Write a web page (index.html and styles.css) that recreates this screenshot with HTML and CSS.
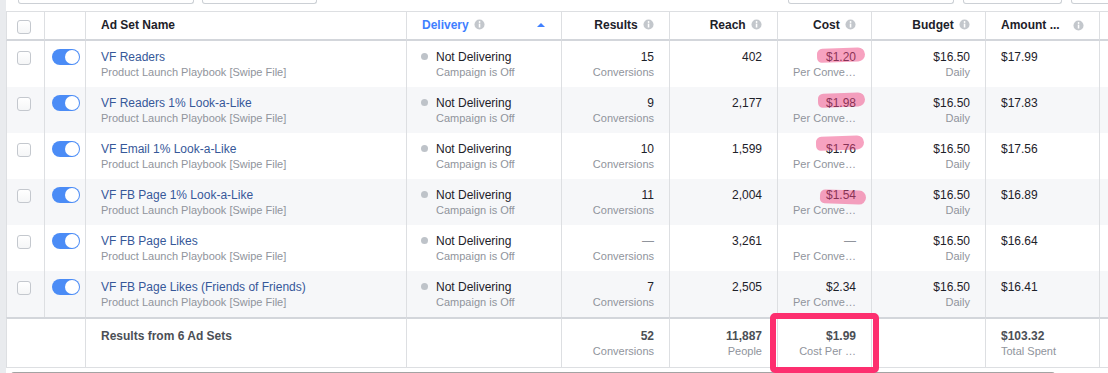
FILE: index.html
```html
<!DOCTYPE html>
<html lang="en">
<head>
<meta charset="utf-8">
<title>Ad Sets</title>
<link rel="stylesheet" href="styles.css">
</head>
<body>
<div class="page">
  <div class="toolbar">
    <span class="tbtn w1"></span>
    <span class="tbtn w2"></span>
    <span class="tbtn w3"></span>
    <span class="tbtn w4"></span>
    <span class="tbtn w5"></span>
  </div>
  <table class="grid">
    <thead>
      <tr>
        <th class="c1"><span class="cb"></span></th>
        <th class="c2"></th>
        <th class="c3 left">Ad Set Name</th>
        <th class="c4 left">
          <div class="hsplit">
            <span class="sorted">Delivery <svg class="info" viewBox="0 0 12 12"><circle cx="6" cy="6" r="5.5" fill="#c3c7cc"/><rect x="5.2" y="5" width="1.7" height="4.3" fill="#fff"/><circle cx="6.1" cy="3.3" r="1" fill="#fff"/></svg></span>
            <span class="caret"></span>
          </div>
        </th>
        <th class="c5 num">Results <svg class="info" viewBox="0 0 12 12"><circle cx="6" cy="6" r="5.5" fill="#c3c7cc"/><rect x="5.2" y="5" width="1.7" height="4.3" fill="#fff"/><circle cx="6.1" cy="3.3" r="1" fill="#fff"/></svg></th>
        <th class="c6 num">Reach <svg class="info" viewBox="0 0 12 12"><circle cx="6" cy="6" r="5.5" fill="#c3c7cc"/><rect x="5.2" y="5" width="1.7" height="4.3" fill="#fff"/><circle cx="6.1" cy="3.3" r="1" fill="#fff"/></svg></th>
        <th class="c7 num">Cost <svg class="info" viewBox="0 0 12 12"><circle cx="6" cy="6" r="5.5" fill="#c3c7cc"/><rect x="5.2" y="5" width="1.7" height="4.3" fill="#fff"/><circle cx="6.1" cy="3.3" r="1" fill="#fff"/></svg></th>
        <th class="c8 num">Budget <svg class="info" viewBox="0 0 12 12"><circle cx="6" cy="6" r="5.5" fill="#c3c7cc"/><rect x="5.2" y="5" width="1.7" height="4.3" fill="#fff"/><circle cx="6.1" cy="3.3" r="1" fill="#fff"/></svg></th>
        <th class="c9 left">
          <div class="hsplit">
            <span>Amount ...</span>
            <svg class="info" viewBox="0 0 12 12"><circle cx="6" cy="6" r="5.5" fill="#c3c7cc"/><rect x="5.2" y="5" width="1.7" height="4.3" fill="#fff"/><circle cx="6.1" cy="3.3" r="1" fill="#fff"/></svg>
          </div>
        </th>
        <th class="c10"></th>
      </tr>
    </thead>
    <tbody>
      <tr>
        <td class="c1"><span class="cb"></span></td>
        <td class="c2"><span class="toggle"></span></td>
        <td><div class="main name">VF Readers</div><div class="sub">Product Launch Playbook [Swipe File]</div></td>
        <td class="deliv"><div class="main"><span class="dot"></span>Not Delivering</div><div class="sub ind">Campaign is Off</div></td>
        <td class="num"><div class="main">15</div><div class="sub">Conversions</div></td>
        <td class="num"><div class="main">402</div></td>
        <td class="num"><div class="main"><span class="hl hl-a">$1.20</span></div><div class="sub">Per Conve…</div></td>
        <td class="num"><div class="main">$16.50</div><div class="sub">Daily</div></td>
        <td><div class="main">$17.99</div></td>
        <td></td>
      </tr>
      <tr>
        <td class="c1"><span class="cb"></span></td>
        <td class="c2"><span class="toggle"></span></td>
        <td><div class="main name">VF Readers 1% Look-a-Like</div><div class="sub">Product Launch Playbook [Swipe File]</div></td>
        <td class="deliv"><div class="main"><span class="dot"></span>Not Delivering</div><div class="sub ind">Campaign is Off</div></td>
        <td class="num"><div class="main">9</div><div class="sub">Conversions</div></td>
        <td class="num"><div class="main">2,177</div></td>
        <td class="num"><div class="main"><span class="hl hl-b">$1.98</span></div><div class="sub">Per Conve…</div></td>
        <td class="num"><div class="main">$16.50</div><div class="sub">Daily</div></td>
        <td><div class="main">$17.83</div></td>
        <td></td>
      </tr>
      <tr>
        <td class="c1"><span class="cb"></span></td>
        <td class="c2"><span class="toggle"></span></td>
        <td><div class="main name">VF Email 1% Look-a-Like</div><div class="sub">Product Launch Playbook [Swipe File]</div></td>
        <td class="deliv"><div class="main"><span class="dot"></span>Not Delivering</div><div class="sub ind">Campaign is Off</div></td>
        <td class="num"><div class="main">10</div><div class="sub">Conversions</div></td>
        <td class="num"><div class="main">1,599</div></td>
        <td class="num"><div class="main"><span class="hl hl-c">$1.76</span></div><div class="sub">Per Conve…</div></td>
        <td class="num"><div class="main">$16.50</div><div class="sub">Daily</div></td>
        <td><div class="main">$17.56</div></td>
        <td></td>
      </tr>
      <tr>
        <td class="c1"><span class="cb"></span></td>
        <td class="c2"><span class="toggle"></span></td>
        <td><div class="main name">VF FB Page 1% Look-a-Like</div><div class="sub">Product Launch Playbook [Swipe File]</div></td>
        <td class="deliv"><div class="main"><span class="dot"></span>Not Delivering</div><div class="sub ind">Campaign is Off</div></td>
        <td class="num"><div class="main">11</div><div class="sub">Conversions</div></td>
        <td class="num"><div class="main">2,004</div></td>
        <td class="num"><div class="main"><span class="hl hl-d">$1.54</span></div><div class="sub">Per Conve…</div></td>
        <td class="num"><div class="main">$16.50</div><div class="sub">Daily</div></td>
        <td><div class="main">$16.89</div></td>
        <td></td>
      </tr>
      <tr>
        <td class="c1"><span class="cb"></span></td>
        <td class="c2"><span class="toggle"></span></td>
        <td><div class="main name">VF FB Page Likes</div><div class="sub">Product Launch Playbook [Swipe File]</div></td>
        <td class="deliv"><div class="main"><span class="dot"></span>Not Delivering</div><div class="sub ind">Campaign is Off</div></td>
        <td class="num"><div class="main dash">—</div><div class="sub">Conversions</div></td>
        <td class="num"><div class="main">3,261</div></td>
        <td class="num"><div class="main dash">—</div><div class="sub">Per Conve…</div></td>
        <td class="num"><div class="main">$16.50</div><div class="sub">Daily</div></td>
        <td><div class="main">$16.64</div></td>
        <td></td>
      </tr>
      <tr>
        <td class="c1"><span class="cb"></span></td>
        <td class="c2"><span class="toggle"></span></td>
        <td><div class="main name">VF FB Page Likes (Friends of Friends)</div><div class="sub">Product Launch Playbook [Swipe File]</div></td>
        <td class="deliv"><div class="main"><span class="dot"></span>Not Delivering</div><div class="sub ind">Campaign is Off</div></td>
        <td class="num"><div class="main">7</div><div class="sub">Conversions</div></td>
        <td class="num"><div class="main">2,505</div></td>
        <td class="num"><div class="main">$2.34</div><div class="sub">Per Conve…</div></td>
        <td class="num"><div class="main">$16.50</div><div class="sub">Daily</div></td>
        <td><div class="main">$16.41</div></td>
        <td></td>
      </tr>
    </tbody>
    <tfoot>
      <tr>
        <td class="c1" colspan="2"></td>
        <td><div class="main strong">Results from 6 Ad Sets</div></td>
        <td></td>
        <td class="num"><div class="main strong">52</div><div class="sub">Conversions</div></td>
        <td class="num"><div class="main strong">11,887</div><div class="sub">People</div></td>
        <td class="num boxed"><div class="main strong">$1.99</div><div class="sub">Cost Per …</div><span class="callout"></span></td>
        <td></td>
        <td><div class="main strong">$103.32</div><div class="sub">Total Spent</div></td>
        <td></td>
      </tr>
    </tfoot>
  </table>
  <div class="hscroll"></div>
</div>
</body>
</html>
```

FILE: styles.css
```css
* { box-sizing: border-box; }

html, body {
  margin: 0;
  padding: 0;
}

body {
  background: #e9ebee;
  overflow: hidden;
  font-family: "Liberation Sans", Arial, Helvetica, sans-serif;
  font-size: 12px;
  color: #1d2129;
}

.page {
  margin-left: 6px;
  background: #fff;
  height: 373px;
  overflow: hidden;
}

/* top toolbar (only the bottoms of the buttons are visible) */
.toolbar {
  display: flex;
  height: 11px;
  align-items: flex-start;
}

.tbtn {
  display: block;
  height: 4px;
  border: 1px solid #ccd0d5;
  border-top: none;
  border-radius: 0 0 3px 3px;
  background: #fff;
  flex: none;
}
.w1 { width: 176px; margin-left: 12px; }
.w2 { width: 115px; margin-left: 8px; }
.w3 { width: 166px; margin-left: 471px; }
.w4 { width: 99px; margin-left: 9px; }
.w5 { width: 80px; margin-left: 9px; }

/* table */
.grid {
  border-collapse: separate;
  border-spacing: 0;
  table-layout: fixed;
  width: 1154px;
}

.grid th,
.grid td {
  border-right: 1px solid #dddfe2;
  vertical-align: top;
  padding: 8px 15px 8px 15px;
  white-space: nowrap;
  overflow: hidden;
}

.grid th:first-child,
.grid td:first-child {
  border-left: 1px solid #dddfe2;
}

.grid th {
  border-top: 1px solid #dddfe2;
  border-bottom: 2px solid #d3d6db;
  font-weight: bold;
  line-height: 16px;
  padding-top: 5px;
  padding-bottom: 5px;
  text-align: left;
  color: #1d2129;
}

.grid th.c1 { width: 39px; }
.grid th.c2 { width: 41px; }
.grid th.c3 { width: 321px; }
.grid th.c4 { width: 155px; }
.grid th.c5 { width: 108px; }
.grid th.c6 { width: 108px; }
.grid th.c7 { width: 94px; }
.grid th.c8 { width: 114px; }
.grid th.c9 { width: 114px; }
.grid th.c10 { width: 60px; border-right: none; }

.grid .c1 { padding-left: 10px; padding-right: 0; }
.grid .c2 { padding-left: 7px; padding-right: 0; }

.grid .num { text-align: right; }

.grid tbody tr:nth-child(even) td { background: #f6f7f9; }

.grid tbody td:last-child,
.grid tfoot td:last-child { border-right: none; }

.main {
  line-height: 16px;
  height: 16px;
}
.sub {
  font-size: 11px;
  line-height: 14px;
  color: #90949c;
}
.name { color: #365899; }
.dash { color: #90949c; }
.strong { font-weight: bold; color: #4b4f56; }

/* header bits */
.hsplit {
  display: flex;
  align-items: center;
  justify-content: space-between;
}
.sorted { color: #4080ff; }
.info {
  width: 11px;
  height: 11px;
  vertical-align: -1px;
  margin-left: 2px;
}
.caret {
  width: 0;
  height: 0;
  border-left: 4px solid transparent;
  border-right: 4px solid transparent;
  border-bottom: 4px solid #4080ff;
  margin-right: 1px;
}

/* checkbox */
.cb {
  display: block;
  width: 14px;
  height: 14px;
  border: 1px solid #c4c8ce;
  border-radius: 3px;
  background: linear-gradient(#fff, #f5f6f7);
  margin-top: 2px;
}
.grid th .cb { margin-top: 3px; }

/* toggle */
.toggle {
  display: block;
  position: relative;
  width: 28px;
  height: 16px;
  border-radius: 8px;
  background: #4b8cf6;
}
.toggle::after {
  content: "";
  position: absolute;
  right: 1px;
  top: 1px;
  width: 14px;
  height: 14px;
  border-radius: 50%;
  background: #fff;
}

/* delivery */
.grid td.deliv { padding-left: 14px; }
.dot {
  display: inline-block;
  width: 7px;
  height: 7px;
  border-radius: 50%;
  background: #bec3c9;
  margin-right: 8px;
  vertical-align: 1px;
}
.ind { padding-left: 15px; }

/* marker highlights over cost values */
.hl {
  position: relative;
  display: inline-block;
}
.hl::before {
  content: "";
  position: absolute;
  left: -9px;
  right: -9px;
  height: 14px;
  border-radius: 7px 9px 9px 6px;
  background: rgba(240, 70, 130, 0.5);
  transform: rotate(-2deg);
}
.hl-a::before { top: -1px; }
.hl-b::before { top: -2px; left: -8px; }
.hl-c::before { top: -5px; left: -10px; right: -8px; }
.hl-d::before { top: 3px; left: -6px; right: -10px; transform: rotate(2deg); }

/* footer */
.grid tfoot td {
  border-top: 2px solid #d3d6db;
  border-bottom: 1px solid #dddfe2;
  padding-top: 9px;
  padding-bottom: 9px;
  overflow: visible;
}
.grid tfoot td.boxed { position: relative; }
.callout {
  position: absolute;
  left: -8px;
  top: -6px;
  width: 109px;
  height: 60px;
  border: 6px solid #fd2f6f;
  border-radius: 5px;
}

/* horizontal scrollbar */
.hscroll {
  margin: 4px 0 0 5px;
  width: 1044px;
  height: 6px;
  border-radius: 3px;
  background: #a3a3a3;
}
```
